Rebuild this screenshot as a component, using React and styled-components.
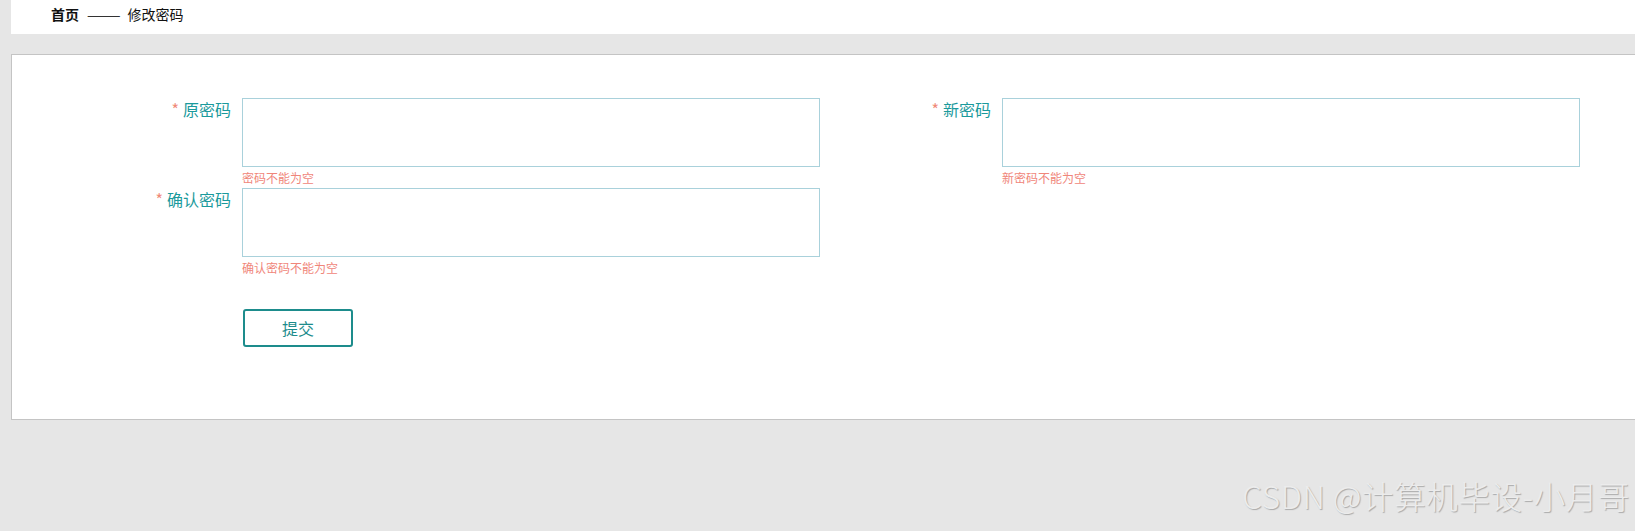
import React from "react";
import styled, { createGlobalStyle } from "styled-components";

const GlobalStyle = createGlobalStyle`
  html, body {
    margin: 0;
    padding: 0;
    background: #e6e6e6;
    font-family: "Microsoft YaHei", "Noto Sans CJK SC", sans-serif;
  }
`;

const fields = [
  { label: "原密码", error: "密码不能为空" },
  { label: "新密码", error: "新密码不能为空" },
  { label: "确认密码", error: "确认密码不能为空" },
];

function App() {
  return (
    <>
      <GlobalStyle />
      <Page>
        <Header>
          <Crumb strong>首页</Crumb>
          <Divider>——</Divider>
          <Crumb>修改密码</Crumb>
        </Header>
        <Panel>
          <FormGrid>
            {fields.map((f) => (
              <FormItem key={f.label}>
                <Label>
                  <Star>*</Star>
                  {f.label}
                </Label>
                <Field>
                  <Input type="password" />
                  <ErrorText>{f.error}</ErrorText>
                </Field>
              </FormItem>
            ))}
          </FormGrid>
          <Actions>
            <SubmitButton>提交</SubmitButton>
          </Actions>
        </Panel>
        <Watermark>CSDN @计算机毕设-小月哥</Watermark>
      </Page>
    </>
  );
}

const Page = styled.div`
  position: relative;
  width: 1635px;
  height: 531px;
  padding-left: 11px;
  box-sizing: border-box;
  overflow: hidden;
`;

const Header = styled.div`
  height: 34px;
  background: #fff;
  display: flex;
  align-items: center;
  padding-left: 40px;
  padding-bottom: 7px;
  box-sizing: border-box;
  font-size: 14px;
  color: #111;
`;

const Crumb = styled.span`
  font-weight: ${(p) => (p.strong ? 700 : 400)};
`;

const Divider = styled.span`
  display: inline-block;
  margin: 0 12px 0 13px;
  color: #333;
  transform: scaleX(1.45);
`;

const Panel = styled.div`
  margin-top: 20px;
  height: 366px;
  background: #fff;
  border: 1px solid #c4c4c4;
  border-right: none;
  box-sizing: border-box;
  padding: 43px 0 0 48px;
`;

const FormGrid = styled.div`
  display: grid;
  grid-template-columns: 760px 760px;
`;

const FormItem = styled.div`
  display: flex;
  height: 90px;
`;

const Label = styled.label`
  width: 183px;
  box-sizing: border-box;
  padding-right: 11px;
  padding-top: 1px;
  text-align: right;
  font-size: 16px;
  color: #1b9a9c;
  line-height: 20px;
`;

const Star = styled.span`
  color: #f08a78;
  margin-right: 4px;
`;

const Field = styled.div`
  display: flex;
  flex-direction: column;
`;

const Input = styled.input`
  width: 578px;
  height: 69px;
  box-sizing: border-box;
  border: 1px solid #a9d1db;
  border-radius: 0;
  outline: none;
  padding: 0 10px;
`;

const ErrorText = styled.div`
  font-size: 12px;
  color: #f0867a;
  line-height: 21px;
`;

const Actions = styled.div`
  padding-left: 183px;
  margin-top: 31px;
`;

const SubmitButton = styled.button`
  width: 110px;
  height: 38px;
  border: 2px solid #1d8c8c;
  border-radius: 3px;
  background: #fff;
  color: #1d8c8c;
  font-family: inherit;
  font-size: 16px;
  cursor: pointer;
`;

const Watermark = styled.div`
  position: absolute;
  right: 5px;
  bottom: 13px;
  font-family: "Noto Sans CJK SC", sans-serif;
  font-size: 31.5px;
  font-weight: 300;
  color: #ececec;
  text-shadow: 1px 1px 1px #a9a9a9;
  letter-spacing: 0.6px;
`;

export default App;
